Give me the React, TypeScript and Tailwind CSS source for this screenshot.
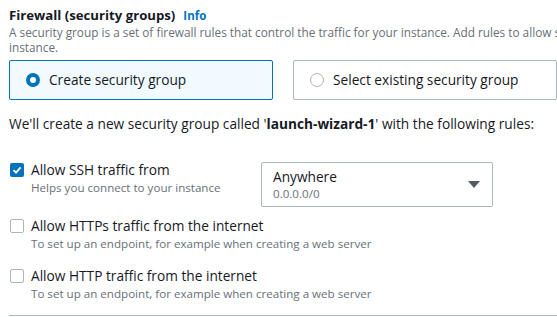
import React from "react";

function Radio({ checked }: { checked: boolean }) {
  return checked ? (
    <span className="box-border inline-block h-[14px] w-[14px] rounded-full border-[4px] border-[#0073bb] bg-white" />
  ) : (
    <span className="box-border inline-block h-[14px] w-[14px] rounded-full border-[1.5px] border-[#aab7b8] bg-white" />
  );
}

function Checkbox({ checked }: { checked: boolean }) {
  return checked ? (
    <span className="flex h-[14px] w-[14px] items-center justify-center rounded-[2px] bg-[#0073bb]">
      <svg width="10" height="10" viewBox="0 0 10 10">
        <path d="M1.5 5.2 L4 7.6 L8.6 2.4" fill="none" stroke="white" strokeWidth="1.8" />
      </svg>
    </span>
  ) : (
    <span className="box-border block h-[14px] w-[14px] rounded-[2px] border border-[#aab7b8] bg-white" />
  );
}

function CheckRow({
  checked,
  label,
  sub,
}: {
  checked: boolean;
  label: string;
  sub: string;
}) {
  return (
    <div className="flex items-start">
      <div className="pt-[3px] pl-[10px] pr-[7px]">
        <Checkbox checked={checked} />
      </div>
      <div>
        <div className="text-[13.7px] leading-[20px] text-[#16191f]">{label}</div>
        <div className="text-[11.6px] leading-[16px] text-[#687078]">{sub}</div>
      </div>
    </div>
  );
}

export default function App() {
  return (
    <div
      className="h-[317px] w-[557px] overflow-hidden bg-white"
      style={{ fontFamily: '"Open Sans", "Noto Sans", sans-serif' }}
    >
      <div className="w-[800px] pl-[9px]">
        <div className="pt-[5px] flex items-baseline gap-[8px]">
          <span className="text-[13.2px] font-bold leading-[20px] text-[#16191f]">
            Firewall (security groups)
          </span>
          <span className="text-[11.5px] font-bold text-[#0073bb]">Info</span>
        </div>
        <div className="w-[740px] text-[11.8px] leading-[15px] text-[#687078]">
          A security group is a set of firewall rules that control the traffic for your instance. Add rules to allow specific traffic to reach your instance.
        </div>
      </div>
      <div className="mt-[5px] flex gap-[20px] pl-[9px]">
        <div className="flex h-[40px] w-[264px] shrink-0 items-center gap-[9px] rounded-[2px] border border-[#0073bb] bg-[#f1faff] pl-[16px]">
          <Radio checked />
          <span className="text-[13.7px] text-[#16191f]">Create security group</span>
        </div>
        <div className="flex h-[40px] w-[264px] shrink-0 items-center gap-[9px] rounded-[2px] border border-[#aab7b8] bg-white pl-[16px]">
          <Radio checked={false} />
          <span className="text-[13.7px] text-[#16191f]">Select existing security group</span>
        </div>
      </div>
      <div className="mt-[14px] pl-[9px] text-[13.7px] leading-[20px] text-[#16191f]">
        We'll create a new security group called '<span className="font-bold">launch-wizard-1</span>' with the following rules:
      </div>
      <div className="mt-[26px] flex items-start">
        <div className="w-[261px]">
          <CheckRow checked label="Allow SSH traffic from" sub="Helps you connect to your instance" />
        </div>
        <div className="mt-[2px] flex h-[45px] w-[232px] items-center rounded-[2px] border border-[#aab7b8] pl-[11px] pr-[12px]">
          <div className="flex-1">
            <div className="text-[13.7px] leading-[18px] text-[#16191f]">Anywhere</div>
            <div className="text-[11.6px] leading-[16px] text-[#687078]">0.0.0.0/0</div>
          </div>
          <svg width="12" height="8" viewBox="0 0 12 8">
            <path d="M0 0 H12 L6 7 Z" fill="#545b64" />
          </svg>
        </div>
      </div>
      <div className="mt-[9px]">
        <CheckRow checked={false} label="Allow HTTPs traffic from the internet" sub="To set up an endpoint, for example when creating a web server" />
      </div>
      <div className="mt-[14px]">
        <CheckRow checked={false} label="Allow HTTP traffic from the internet" sub="To set up an endpoint, for example when creating a web server" />
      </div>
      <div className="ml-[9px] mt-[13px] h-px bg-[#aab7b8]" />
    </div>
  );
}
